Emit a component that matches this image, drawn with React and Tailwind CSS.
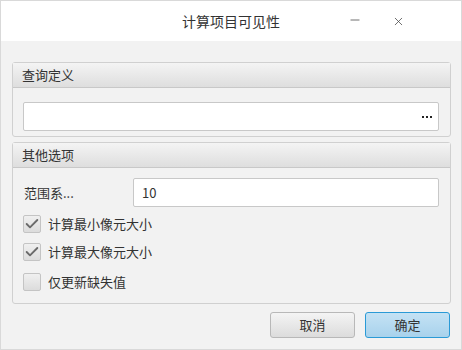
import { Check, Minus, X } from 'lucide-react'

const font = { fontFamily: '"Noto Sans CJK SC", "Noto Sans", sans-serif' }

function Panel({ title, children, className }) {
    return (
        <div className={`flex flex-col rounded-[3px] border border-[#d0d0d0] bg-[#f2f2f2] ${className}`}>
            <div className="flex h-[25px] shrink-0 items-center border-b border-[#c8c8c8] bg-gradient-to-b from-[#f4f4f4] to-[#dedede] px-[9px] text-[13px] text-[#333]">
                {title}
            </div>
            {children}
        </div>
    )
}

function CheckRow({ checked, label }) {
    return (
        <div className="flex h-[18px] items-center gap-[7px]">
            <div className="flex h-[18px] w-[18px] items-center justify-center rounded-[2px] border border-[#c4c4c4] bg-gradient-to-b from-[#f0f0f0] to-[#dcdcdc]">
                {checked && <Check size={16} strokeWidth={2.8} className="text-[#6a6a6a]" />}
            </div>
            <span className="text-[13px] text-[#333]">{label}</span>
        </div>
    )
}

export default function App() {
    return (
        <div
            className="flex h-[350px] w-[462px] flex-col border border-[#d9d9d9] bg-[#f2f2f2]"
            style={font}
        >
            <div className="relative flex h-[40px] shrink-0 items-center justify-center bg-white">
                <span className="text-[14px] text-[#333]">计算项目可见性</span>
                <Minus size={14} strokeWidth={1.3} className="absolute left-[347px] top-[12px] text-[#444]" />
                <X size={13} strokeWidth={1.4} className="absolute left-[391px] top-[14px] text-[#444]" />
            </div>

            <div className="flex flex-1 flex-col pl-[11px] pr-[10px] pt-[21px]">
                <Panel title="查询定义" className="h-[75px]">
                    <div className="pl-[10px] pr-[11px] pt-[14px]">
                        <div className="flex h-[29px] items-center justify-end gap-[2px] rounded-[2px] border border-[#c8c8c8] bg-white pr-[6px]">
                            <div className="h-[2px] w-[2px] bg-[#222]" />
                            <div className="h-[2px] w-[2px] bg-[#222]" />
                            <div className="h-[2px] w-[2px] bg-[#222]" />
                        </div>
                    </div>
                </Panel>

                <Panel title="其他选项" className="mt-[5px] h-[162px]">
                    <div className="flex flex-col pl-[10px] pr-[11px] pt-[10px]">
                        <div className="flex h-[29px] items-center">
                            <span className="w-[110px] pl-[1px] text-[13px] text-[#333]">范围系...</span>
                            <div className="flex h-[29px] flex-1 items-center rounded-[2px] border border-[#c8c8c8] bg-white px-[8px] text-[13px] text-[#333]">
                                10
                            </div>
                        </div>
                        <div className="mt-[8px] flex flex-col gap-[10px]">
                            <CheckRow checked label="计算最小像元大小" />
                            <CheckRow checked label="计算最大像元大小" />
                            <div className="mt-[2px]">
                                <CheckRow label="仅更新缺失值" />
                            </div>
                        </div>
                    </div>
                </Panel>

                <div className="mt-[8px] flex justify-end gap-[10px] pr-[1px]">
                    <button className="h-[26px] w-[85px] rounded-[3px] border border-[#b8b8b8] bg-gradient-to-b from-[#f4f4f4] to-[#dcdcdc] text-[13px] text-[#333]">
                        取消
                    </button>
                    <button className="h-[26px] w-[85px] rounded-[3px] border border-[#2a9ad6] bg-gradient-to-b from-[#c4e2f4] to-[#a8d2ec] text-[13px] text-[#333]">
                        确定
                    </button>
                </div>
            </div>
        </div>
    )
}
